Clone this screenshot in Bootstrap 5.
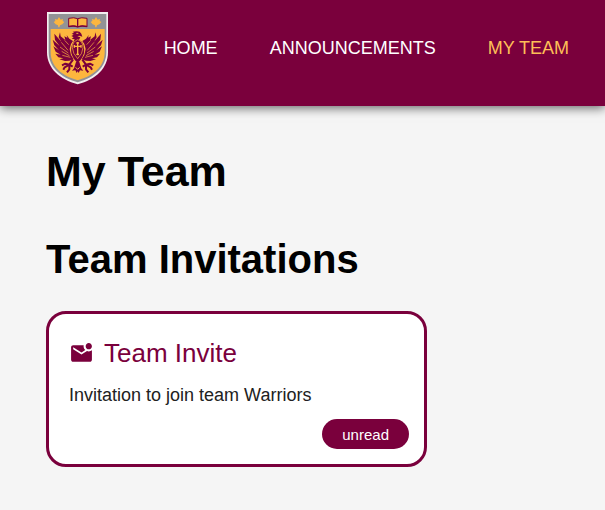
<!DOCTYPE html>
<html lang="en">
<head>
<meta charset="utf-8">
<meta name="viewport" content="width=device-width, initial-scale=1">
<title>My Team</title>
<link href="https://cdn.jsdelivr.net/npm/bootstrap@5.3.0/dist/css/bootstrap.min.css" rel="stylesheet">
<style>
  :root { --maroon: #7a003c; --gold: #fdbf57; }
  body { font-family: "Liberation Sans", Arial, sans-serif; background: #f5f5f5; color: #212121; }
  .site-header { background: var(--maroon); min-height: 106px; padding: 11px 36px 21px 46px; box-shadow: 0 2px 10px rgba(0, 0, 0, .6); }
  .crest { width: 63px; height: 74px; }
  .site-links { gap: 52px; }
  .site-links .nav-link { color: #fff; font-size: 18px; line-height: 24px; }
  .site-links .nav-link.active { color: var(--gold); }
  .page-body { padding: 38px 46px; }
  .page-title { font-size: 43px; line-height: 54px; color: #000; margin-bottom: 37px; }
  .section-title { font-size: 40px; line-height: 48px; color: #000; margin-bottom: 28px; }
  .invite { max-width: 381px; border: 3px solid var(--maroon); border-radius: 20px; }
  .invite-body { padding: 23px 15px 15px 20px; }
  .invite-title { color: var(--maroon); font-size: 26px; line-height: 32px; gap: 10px; margin-bottom: 14px; }
  .invite-text { font-size: 18px; line-height: 24px; margin-bottom: 12px; }
  .btn-status { --bs-btn-color: #fff; --bs-btn-bg: var(--maroon); --bs-btn-hover-color: #fff; --bs-btn-hover-bg: #5e002e; font-size: 15px; line-height: 20px; padding: 6px 20px 4px; border: 0; }
</style>
</head>
<body>
<header class="site-header d-flex align-items-center justify-content-between position-relative">
  <a href="#" aria-label="Home page" class="d-block flex-shrink-0">
    <svg class="crest d-block" viewBox="18 18 189 222" aria-hidden="true">
      <path d="M21 21H204V142C204 190 167 224 113 238C59 224 21 190 21 142Z" fill="#f3eef0"/>
      <path d="M26 27H199V142C199 186 164 218 113 232C61 218 26 186 26 142Z" fill="#929396"/>
      <path d="M32 72H194V142C194 183 161 213 113 226C64 213 32 183 32 142Z" fill="#fdb63e"/>
      <g fill="#fdb63e">
        <path id="leaf" d="M57 36L62 44L69 42L68 48L73 51L67 58L60 61L58 67H55L54 61L47 58L41 51L46 48L45 42L52 44Z"/>
        <use href="#leaf" x="111"/>
        <path d="M86 40Q102 36 113 41Q124 36 141 40V64Q123 60 114 65Q102 60 86 64Z" stroke="#7a003c" stroke-width="3"/>
      </g>
      <path d="M113 41V64M85 65Q102 61 113 66Q125 61 142 65" fill="none" stroke="#7a003c" stroke-width="4"/>
      <g fill="#7a003c">
        <path d="M94 93L101 89L95 86L102 83L98 80L108 79Q120 78 124 86L127 95L118 92L112 94L121 97L117 104L126 111Q135 126 132 145Q127 162 113 174Q99 162 94 145Q91 126 100 112L104 103L95 101L101 97Z"/>
        <g id="wing">
          <path d="M60 82L62 94L76 105L73 94L82 98L80 90L88 101L99 108L93 117L89 132L93 150L101 163L88 167L75 168L58 163L70 160L55 157L46 146L62 149L47 140L40 124L57 136L43 121L38 104L59 123L45 105L43 86L64 110L56 97Z"/>
        </g>
        <use href="#wing" transform="translate(226 0) scale(-1 1)"/>
        <path d="M108 171H118L124 190L130 197L120 196L116 204L113 199L110 204L106 196L96 197L102 190Z"/>
      </g>
      <g id="feathers" fill="none" stroke="#fdb63e" stroke-width="2">
        <path d="M64 112L84 136M60 126L85 144M65 139L88 152M67 151L91 157M74 106L86 119"/>
      </g>
      <use href="#feathers" transform="translate(226 0) scale(-1 1)"/>
      <g id="claw" fill="none" stroke="#7a003c" stroke-width="6" stroke-linejoin="round">
        <path d="M99 164L88 179L76 176L66 181M88 179L74 187L70 194M88 179L88 193L81 202M88 179L98 185"/>
      </g>
      <use href="#claw" transform="translate(226 0) scale(-1 1)"/>
      <g fill="none" stroke="#fdb63e">
        <path d="M113 111V151M104 124H122M109 114H117M103 120V128M123 120V128M109 148H117" stroke-width="4"/>
        <path d="M113 104Q97 110 97 128Q98 146 113 161Q128 146 129 128Q129 110 113 104Z" stroke-width="2"/>
        <path d="M107 187L113 193L119 187" stroke-width="3"/>
        <path d="M109 85H115" stroke-width="3"/>
      </g>
    </svg>
  </a>
  <nav aria-label="Main">
    <ul class="nav site-links flex-nowrap">
      <li class="nav-item"><a class="nav-link p-0" href="#">HOME</a></li>
      <li class="nav-item"><a class="nav-link p-0" href="#">ANNOUNCEMENTS</a></li>
      <li class="nav-item"><a class="nav-link p-0 active" aria-current="page" href="#">MY TEAM</a></li>
    </ul>
  </nav>
</header>
<main class="page-body">
  <h1 class="page-title fw-bold">My Team</h1>
  <h2 class="section-title fw-bold">Team Invitations</h2>
  <article class="card invite">
    <div class="card-body invite-body">
      <h3 class="invite-title d-flex align-items-center fw-normal">
        <svg width="25" height="25" viewBox="0 0 24 24" fill="currentColor" aria-hidden="true"><path d="M22 8.98V18c0 1.1-.9 2-2 2H4c-1.1 0-2-.9-2-2V6c0-1.1.9-2 2-2h10.1c-.06.32-.1.66-.1 1 0 1.48.65 2.79 1.67 3.71L12 11 4 6v2l8 5 5.3-3.32c.54.2 1.1.32 1.7.32 1.13 0 2.16-.39 3-1.02zM16 5c0 1.66 1.34 3 3 3s3-1.34 3-3-1.34-3-3-3-3 1.34-3 3z"/></svg>
        Team Invite
      </h3>
      <p class="invite-text">Invitation to join team Warriors</p>
      <div class="d-flex justify-content-end">
        <button type="button" class="btn btn-status rounded-pill">unread</button>
      </div>
    </div>
  </article>
</main>
<script src="https://cdn.jsdelivr.net/npm/bootstrap@5.3.0/dist/js/bootstrap.bundle.min.js"></script>
</body>
</html>
